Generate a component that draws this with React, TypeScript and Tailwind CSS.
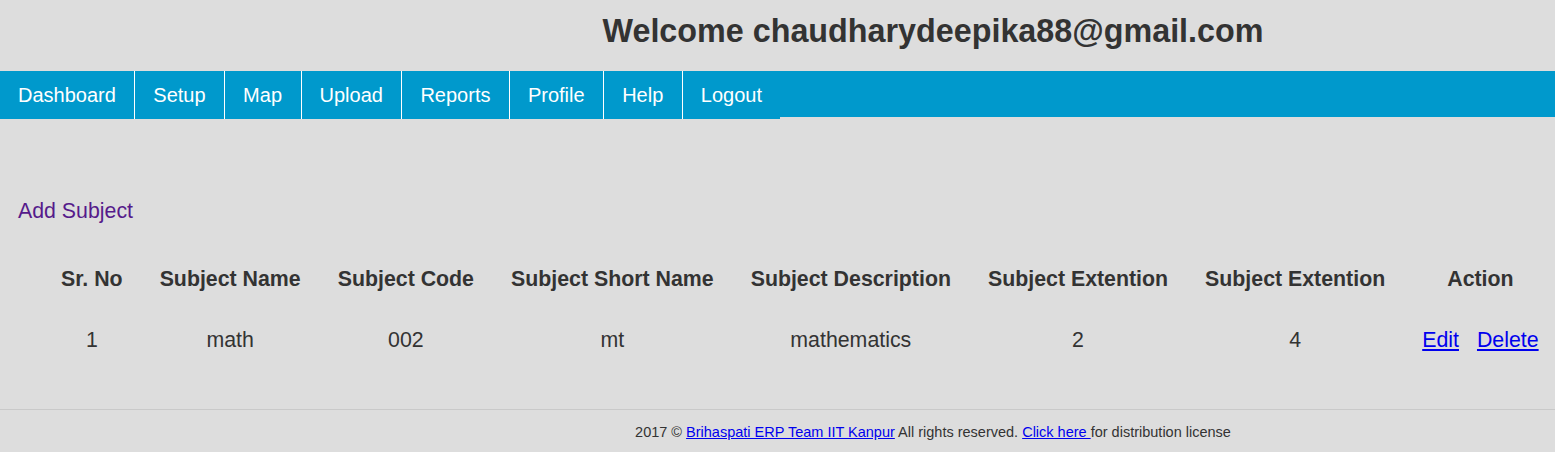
import React from "react";

const navItems = ["Dashboard", "Setup", "Map", "Upload", "Reports", "Profile", "Help", "Logout"];

const headers = [
    "Sr. No",
    "Subject Name",
    "Subject Code",
    "Subject Short Name",
    "Subject Description",
    "Subject Extention",
    "Subject Extention",
    "Action",
];

const rows = [
    { sr: "1", name: "math", code: "002", short: "mt", desc: "mathematics", ext1: "2", ext2: "4" },
];

const App: React.FC = () => {
    return (
        <div className="min-h-screen w-full overflow-hidden bg-[#dddddd] font-['Liberation_Sans',Arial,sans-serif] text-[#333]">
            {/* header */}
            <div className="flex h-[71px]">
                <div className="w-[20%]" />
                <div className="w-[80%] pt-[13px] text-center">
                    <h1 className="text-[32.3px] font-bold leading-[37px] text-[#333]">
                        Welcome chaudharydeepika88@gmail.com
                    </h1>
                </div>
            </div>

            {/* menu */}
            <div className="h-[46px] bg-[#0099cc]">
                <ul className="flex h-[48px] w-fit bg-[#0099cc]">
                    {navItems.map((item, i) => (
                        <li
                            key={item}
                            className={`flex items-center pl-[18px] pr-[18.5px] text-[20px] leading-[23px] text-white ${
                                i < navItems.length - 1 ? "border-r border-white" : ""
                            }`}
                        >
                            <a href="#">{item}</a>
                        </li>
                    ))}
                </ul>
            </div>

            {/* content */}
            <div className="px-[18px] pt-[82px]">
                <a href="#" className="text-[21.33px] leading-[24.5px] text-[#551a8b]">
                    Add Subject
                </a>
                <table className="ml-[24.5px] mt-[23px] border-collapse text-[21.33px] leading-[24.5px]">
                    <thead>
                        <tr>
                            {headers.map((h, i) => (
                                <th key={i} className="p-[18.5px] text-center font-bold whitespace-nowrap">
                                    {h}
                                </th>
                            ))}
                        </tr>
                    </thead>
                    <tbody>
                        {rows.map((r) => (
                            <tr key={r.sr}>
                                <td className="p-[18.5px] text-center">{r.sr}</td>
                                <td className="p-[18.5px] text-center">{r.name}</td>
                                <td className="p-[18.5px] text-center">{r.code}</td>
                                <td className="p-[18.5px] text-center">{r.short}</td>
                                <td className="p-[18.5px] text-center">{r.desc}</td>
                                <td className="p-[18.5px] text-center">{r.ext1}</td>
                                <td className="p-[18.5px] text-center">{r.ext2}</td>
                                <td className="p-[18.5px] text-center whitespace-nowrap">
                                    <a href="#" className="text-[#0000ee] underline">Edit</a>
                                    <a href="#" className="ml-[18px] text-[#0000ee] underline">Delete</a>
                                </td>
                            </tr>
                        ))}
                    </tbody>
                </table>
            </div>

            {/* footer */}
            <div className="mt-[38px] flex border-t border-[#c9c9c9]">
                <div className="w-[20%]" />
                <div className="w-[80%] pt-[14px] pb-[10px] text-center text-[14.5px] leading-[17px] text-[#333]">
                    2017 © <a href="#" className="text-[#0000ee] underline">Brihaspati ERP Team IIT Kanpur</a> All rights reserved.{" "}
                    <a href="#" className="text-[#0000ee] underline">Click here </a>for distribution license
                </div>
            </div>
        </div>
    );
};

export default App;
